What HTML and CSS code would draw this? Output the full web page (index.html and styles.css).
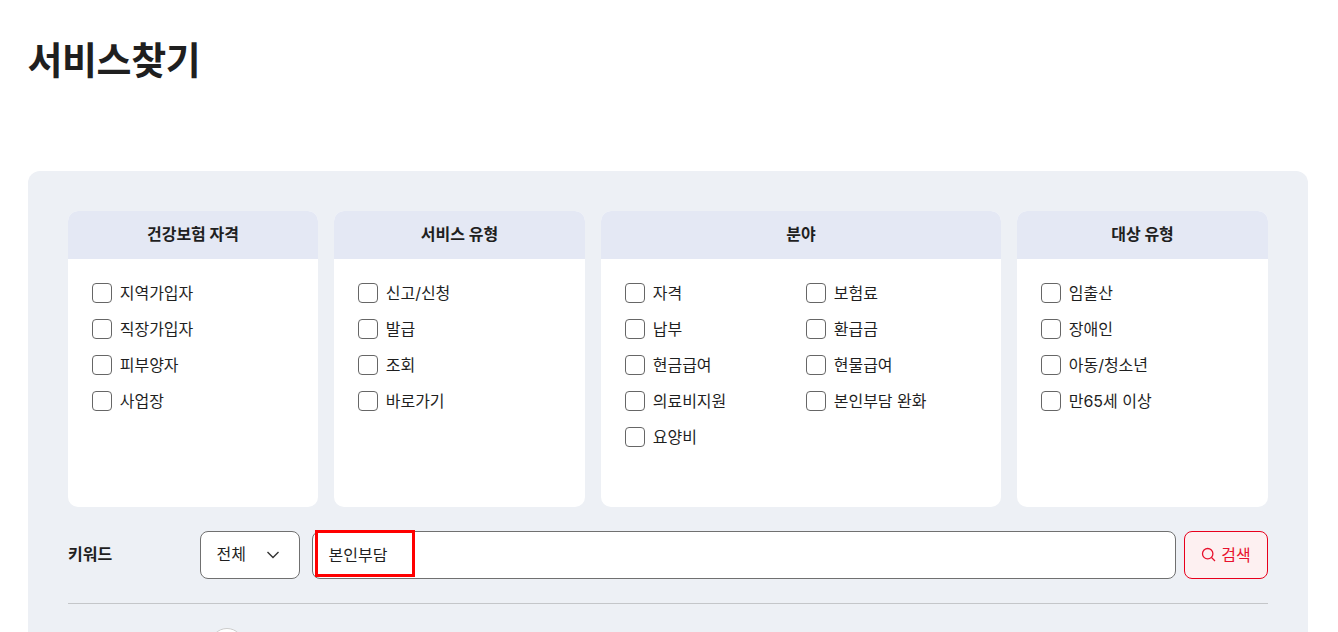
FILE: index.html
```html
<!DOCTYPE html>
<html lang="ko">
<head>
<meta charset="utf-8">
<title>서비스찾기</title>
<link rel="stylesheet" href="styles.css">
</head>
<body>
<main class="page">
  <h1 class="title">서비스찾기</h1>
  <section class="panel">
    <div class="cards">
      <div class="card">
        <h2 class="card-head">건강보험 자격</h2>
        <div class="card-body">
          <label class="check"><span class="box"></span>지역가입자</label>
          <label class="check"><span class="box"></span>직장가입자</label>
          <label class="check"><span class="box"></span>피부양자</label>
          <label class="check"><span class="box"></span>사업장</label>
        </div>
      </div>
      <div class="card">
        <h2 class="card-head">서비스 유형</h2>
        <div class="card-body">
          <label class="check"><span class="box"></span>신고/신청</label>
          <label class="check"><span class="box"></span>발급</label>
          <label class="check"><span class="box"></span>조회</label>
          <label class="check"><span class="box"></span>바로가기</label>
        </div>
      </div>
      <div class="card">
        <h2 class="card-head">분야</h2>
        <div class="card-body two">
          <label class="check"><span class="box"></span>자격</label>
          <label class="check"><span class="box"></span>보험료</label>
          <label class="check"><span class="box"></span>납부</label>
          <label class="check"><span class="box"></span>환급금</label>
          <label class="check"><span class="box"></span>현금급여</label>
          <label class="check"><span class="box"></span>현물급여</label>
          <label class="check"><span class="box"></span>의료비지원</label>
          <label class="check"><span class="box"></span>본인부담 완화</label>
          <label class="check"><span class="box"></span>요양비</label>
        </div>
      </div>
      <div class="card">
        <h2 class="card-head">대상 유형</h2>
        <div class="card-body">
          <label class="check"><span class="box"></span>임출산</label>
          <label class="check"><span class="box"></span>장애인</label>
          <label class="check"><span class="box"></span>아동/청소년</label>
          <label class="check"><span class="box"></span>만65세 이상</label>
        </div>
      </div>
    </div>
    <div class="keyword">
      <span class="keyword-label">키워드</span>
      <div class="select">전체
        <svg class="chev" width="14" height="8" viewBox="0 0 14 8"><path d="M1.5 1 7 6.5 12.5 1" fill="none" stroke="#333" stroke-width="1.4"/></svg>
      </div>
      <div class="input"><span class="mark">본인부담</span></div>
      <button class="search" type="button">
        <svg width="15" height="15" viewBox="0 0 15 15"><circle cx="6.7" cy="6.7" r="5.2" fill="none" stroke="#e8112d" stroke-width="1.3"/><path d="M10.5 10.5 14 14" stroke="#e8112d" stroke-width="1.3"/></svg>
        검색
      </button>
    </div>
    <div class="divider"></div>
    <div class="next"><span class="radio"></span></div>
  </section>
</main>
</body>
</html>
```
FILE: styles.css
```css
* { box-sizing: border-box; }
html, body { height: 632px; overflow: hidden; }
body {
  margin: 0;
  background: #fff;
  color: #1f1f1f;
  font-family: Inter, "Noto Sans CJK KR", sans-serif;
}
.page { padding: 0 30px 0 28px; }
.title {
  margin: 0 0 0 -0.5px;
  padding-top: 32px;
  height: 171px;
  font-size: 38px;
  line-height: 56px;
  font-weight: 700;
  letter-spacing: -0.4px;
}
.panel {
  background: #edf0f5;
  border-radius: 12px 12px 0 0;
  padding: 40px 40px 0;
  height: 461px;
  overflow: hidden;
}
.cards {
  display: grid;
  grid-template-columns: 250px 251px 400px 251px;
  gap: 16px;
  height: 296px;
}
.card {
  background: #fff;
  border-radius: 10px;
  overflow: hidden;
}
.card-head {
  margin: 0;
  height: 48px;
  background: #e4e8f4;
  text-align: center;
  font-size: 16px;
  font-weight: 700;
  line-height: 47px;
}
.card-body {
  display: grid;
  grid-auto-rows: 36px;
  padding: 16px 24px;
}
.card-body.two { grid-template-columns: 181px 1fr; }
.check {
  display: flex;
  align-items: center;
  gap: 7.7px;
  padding-bottom: 2px;
  font-size: 16px;
}
.box {
  width: 20px;
  height: 20px;
  flex: none;
  margin-bottom: -2px;
  background: #fff;
  border: 1px solid #666;
  border-radius: 4px;
}
.keyword {
  display: flex;
  align-items: center;
  margin-top: 24px;
  height: 48px;
}
.keyword-label {
  width: 132px;
  padding-bottom: 4px;
  font-size: 16px;
  font-weight: 700;
}
.select {
  display: flex;
  align-items: center;
  justify-content: space-between;
  width: 100px;
  height: 48px;
  padding: 0 19px 4px 15.5px;
  background: #fff;
  border: 1px solid #707070;
  border-radius: 8px;
  font-size: 16px;
}
.chev { margin-top: 4px; }
.input {
  position: relative;
  flex: 1;
  height: 48px;
  margin: 0 8px 0 12px;
  background: #fff;
  border: 1px solid #707070;
  border-radius: 8px;
  padding-left: 15.5px;
  font-size: 16px;
  line-height: 46px;
}
.mark::after {
  content: "";
  position: absolute;
  box-sizing: border-box;
  left: 2px;
  top: -2px;
  width: 100px;
  height: 47px;
  border: 3px solid #f00;
}
.search {
  display: flex;
  align-items: center;
  justify-content: center;
  gap: 5px;
  width: 84px;
  height: 48px;
  padding: 0 0 2px;
  background: #fdf0f1;
  border: 1px solid #e8001c;
  border-radius: 8px;
  color: #e8112d;
  font: inherit;
  font-size: 16px;
}
.divider {
  margin-top: 24px;
  height: 1px;
  background: #c4c6c9;
}
.next {
  padding: 24px 0 0 142px;
}
.radio {
  display: block;
  width: 34px;
  height: 34px;
  border: 1px solid #ccc;
  border-radius: 50%;
  background: #fff;
}
```
